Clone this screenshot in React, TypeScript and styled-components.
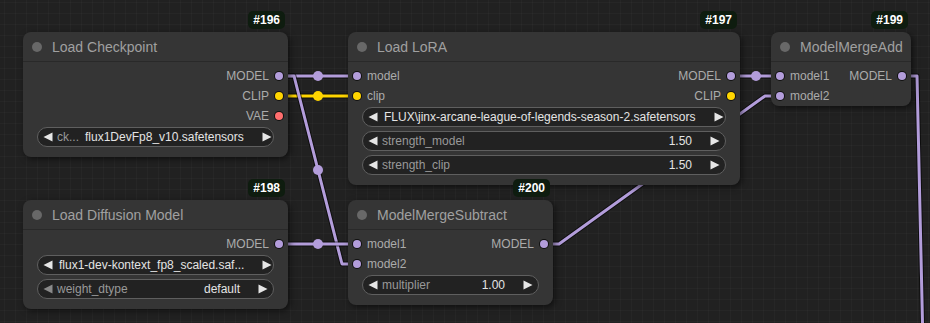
import React from 'react';
import styled, { createGlobalStyle } from 'styled-components';

type SlotType = 'MODEL' | 'CLIP' | 'VAE';
type Slot = { name: string; type: SlotType };
type Widget = { label?: string; value: string; dimLeft?: boolean };
type NodeDef = {
  id: number;
  title: string;
  x: number;
  y: number;
  w: number;
  inputs: Slot[];
  outputs: Slot[];
  widgets: Widget[];
};

const slotColors: Record<SlotType, string> = {
  MODEL: '#b39ddb',
  CLIP: '#ffd500',
  VAE: '#ff6e6e',
};

const nodes: NodeDef[] = [
  {
    id: 196,
    title: 'Load Checkpoint',
    x: 23,
    y: 32,
    w: 265,
    inputs: [],
    outputs: [
      { name: 'MODEL', type: 'MODEL' },
      { name: 'CLIP', type: 'CLIP' },
      { name: 'VAE', type: 'VAE' },
    ],
    widgets: [{ label: 'ck...', value: 'flux1DevFp8_v10.safetensors' }],
  },
  {
    id: 197,
    title: 'Load LoRA',
    x: 348,
    y: 32,
    w: 392,
    inputs: [
      { name: 'model', type: 'MODEL' },
      { name: 'clip', type: 'CLIP' },
    ],
    outputs: [
      { name: 'MODEL', type: 'MODEL' },
      { name: 'CLIP', type: 'CLIP' },
    ],
    widgets: [
      { value: 'FLUX\\jinx-arcane-league-of-legends-season-2.safetensors' },
      { label: 'strength_model', value: '1.50' },
      { label: 'strength_clip', value: '1.50' },
    ],
  },
  {
    id: 199,
    title: 'ModelMergeAdd',
    x: 771,
    y: 32,
    w: 140,
    inputs: [
      { name: 'model1', type: 'MODEL' },
      { name: 'model2', type: 'MODEL' },
    ],
    outputs: [{ name: 'MODEL', type: 'MODEL' }],
    widgets: [],
  },
  {
    id: 198,
    title: 'Load Diffusion Model',
    x: 23,
    y: 200,
    w: 265,
    inputs: [],
    outputs: [{ name: 'MODEL', type: 'MODEL' }],
    widgets: [
      { value: 'flux1-dev-kontext_fp8_scaled.saf...' },
      { label: 'weight_dtype', value: 'default', dimLeft: true },
    ],
  },
  {
    id: 200,
    title: 'ModelMergeSubtract',
    x: 348,
    y: 200,
    w: 205,
    inputs: [
      { name: 'model1', type: 'MODEL' },
      { name: 'model2', type: 'MODEL' },
    ],
    outputs: [{ name: 'MODEL', type: 'MODEL' }],
    widgets: [{ label: 'multiplier', value: '1.00' }],
  },
];

// links: points of the linear path, plus the midpoint marker
type Link = { type: SlotType; pts: [number, number][]; mid: [number, number] };

const links: Link[] = [
  { type: 'MODEL', pts: [[279, 76], [357, 76]], mid: [318, 76] },
  { type: 'CLIP', pts: [[279, 96], [357, 96]], mid: [318, 96] },
  { type: 'MODEL', pts: [[279, 76], [294, 76], [342, 264], [357, 264]], mid: [318, 170] },
  { type: 'MODEL', pts: [[279, 244], [357, 244]], mid: [318, 244] },
  { type: 'MODEL', pts: [[731, 76], [780, 76]], mid: [756, 76] },
  { type: 'MODEL', pts: [[544, 244], [559, 244], [765, 96], [780, 96]], mid: [662, 170] },
  { type: 'MODEL', pts: [[902, 76], [917, 76], [926, 480]], mid: [921, 400] },
];

const GlobalStyle = createGlobalStyle`
  html, body {
    margin: 0;
    padding: 0;
    background: #212121;
  }
  body {
    font-family: "Liberation Sans", Arial, sans-serif;
  }
`;

const Canvas = styled.div`
  position: relative;
  width: 930px;
  height: 323px;
  overflow: hidden;
  background-color: #212121;
  background-image:
    linear-gradient(to right, rgba(255, 255, 255, 0.025) 1px, transparent 1px),
    linear-gradient(to bottom, rgba(255, 255, 255, 0.025) 1px, transparent 1px);
  background-size: 11px 11px;
  background-position: 4px 2px;
`;

const Wires = styled.svg`
  position: absolute;
  inset: 0;
  width: 930px;
  height: 323px;
`;

const NodeBox = styled.div<{ $x: number; $y: number; $w: number }>`
  position: absolute;
  left: ${(p) => p.$x}px;
  top: ${(p) => p.$y}px;
  width: ${(p) => p.$w}px;
  background: #353535;
  border-radius: 8px;
  box-shadow: 2px 2px 6px rgba(0, 0, 0, 0.55);
  display: flex;
  flex-direction: column;
`;

const Badge = styled.div`
  position: absolute;
  right: 3px;
  top: -21px;
  height: 18px;
  padding: 0 5px;
  border-radius: 5px;
  background: #0e1c0f;
  color: #fff;
  font-size: 12px;
  font-weight: bold;
  display: flex;
  align-items: center;
`;

const TitleBar = styled.div`
  height: 30px;
  display: flex;
  align-items: center;
  gap: 10px;
  padding-left: 9px;
  border-bottom: 1px solid rgba(0, 0, 0, 0.22);
  box-sizing: border-box;
`;

const TitleDot = styled.span`
  width: 10px;
  height: 10px;
  border-radius: 50%;
  background: #686868;
`;

const TitleText = styled.span`
  font-size: 14px;
  color: #a0a0a0;
`;

const Body = styled.div<{ $bottom: number }>`
  padding-top: 4px;
  padding-bottom: ${(p) => p.$bottom}px;
  display: flex;
  flex-direction: column;
`;

const SlotRow = styled.div`
  height: 20px;
  display: flex;
  align-items: center;
  justify-content: space-between;
`;

const SlotCell = styled.div<{ $out?: boolean }>`
  display: flex;
  align-items: center;
  flex-direction: ${(p) => (p.$out ? 'row-reverse' : 'row')};
  gap: 6px;
  padding: ${(p) => (p.$out ? '0 5px 0 0' : '0 0 0 5px')};
  font-size: 12px;
  color: #ababab;
`;

const SlotDot = styled.span<{ $color: string }>`
  width: 8px;
  height: 8px;
  border-radius: 50%;
  background: ${(p) => p.$color};
  box-shadow: 0 0 0 1px #111;
`;

const WidgetList = styled.div`
  display: flex;
  flex-direction: column;
  gap: 4px;
  padding: 1px 14px 0 14px;
`;

const WidgetPill = styled.div`
  height: 20px;
  box-sizing: border-box;
  border: 1px solid #5f5f5f;
  border-radius: 10px;
  background: #222;
  display: flex;
  align-items: center;
  padding: 0 5px;
  font-size: 12px;
  white-space: nowrap;
  overflow: hidden;
`;

const WidgetLabel = styled.span`
  color: #999;
  margin-left: 4px;
  flex: none;
`;

const WidgetValue = styled.span`
  color: #e4e4e4;
  margin-left: auto;
  padding-left: 6px;
`;

const ArrowWrap = styled.span<{ $gap: number }>`
  display: flex;
  flex: none;
  margin-left: ${(p) => p.$gap}px;
`;

function Arrow({ dir, dim, gap = 0 }: { dir: 'left' | 'right'; dim?: boolean; gap?: number }) {
  const pts = dir === 'left' ? '9.5,0.5 9.5,9.5 0.5,5' : '0.5,0.5 0.5,9.5 9.5,5';
  return (
    <ArrowWrap $gap={gap}>
      <svg width="10" height="10" viewBox="0 0 10 10">
        <polygon points={pts} fill={dim ? '#8a8a8a' : '#e6e6e6'} />
      </svg>
    </ArrowWrap>
  );
}

function GraphNode({ node }: { node: NodeDef }) {
  const rows = Math.max(node.inputs.length, node.outputs.length);
  const hasWidgets = node.widgets.length > 0;
  return (
    <NodeBox $x={node.x} $y={node.y} $w={node.w}>
      <Badge>#{node.id}</Badge>
      <TitleBar>
        <TitleDot />
        <TitleText>{node.title}</TitleText>
      </TitleBar>
      <Body $bottom={hasWidgets ? 10 : 0}>
        {Array.from({ length: rows }).map((_, i) => {
          const inp = node.inputs[i];
          const out = node.outputs[i];
          return (
            <SlotRow key={i}>
              {inp ? (
                <SlotCell>
                  <SlotDot $color={slotColors[inp.type]} />
                  {inp.name}
                </SlotCell>
              ) : (
                <span />
              )}
              {out ? (
                <SlotCell $out>
                  <SlotDot $color={slotColors[out.type]} />
                  {out.name}
                </SlotCell>
              ) : (
                <span />
              )}
            </SlotRow>
          );
        })}
        {hasWidgets && (
          <WidgetList>
            {node.widgets.map((w, i) => (
              <WidgetPill key={i}>
                <Arrow dir="left" dim={w.dimLeft} />
                {w.label && <WidgetLabel>{w.label}</WidgetLabel>}
                <WidgetValue>{w.value}</WidgetValue>
                <Arrow dir="right" gap={18} />
              </WidgetPill>
            ))}
          </WidgetList>
        )}
      </Body>
    </NodeBox>
  );
}

export default function App() {
  return (
    <>
      <GlobalStyle />
      <Canvas>
        <Wires viewBox="0 0 930 323">
          {links.map((l, i) => {
            const d = l.pts.map((p, j) => `${j ? 'L' : 'M'}${p[0]} ${p[1]}`).join(' ');
            return (
              <g key={i}>
                <path d={d} fill="none" stroke="rgba(0,0,0,0.6)" strokeWidth={5} strokeLinejoin="round" />
                <path d={d} fill="none" stroke={slotColors[l.type]} strokeWidth={3} strokeLinejoin="round" />
                <circle cx={l.mid[0]} cy={l.mid[1]} r={5} fill={slotColors[l.type]} />
              </g>
            );
          })}
        </Wires>
        {nodes.map((n) => (
          <GraphNode key={n.id} node={n} />
        ))}
      </Canvas>
    </>
  );
}
